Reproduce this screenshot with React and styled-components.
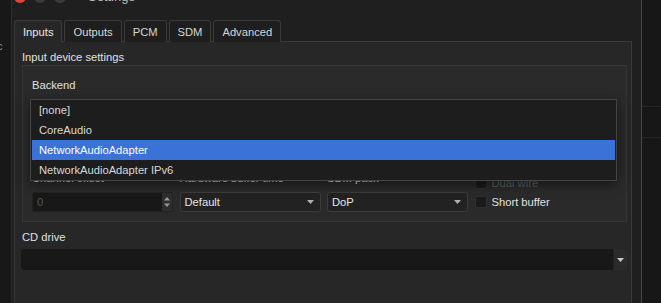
import React from "react"
import styled, { createGlobalStyle } from "styled-components"

const GlobalStyle = createGlobalStyle`
  html, body {
    margin: 0;
    padding: 0;
    background: #1e1e1e;
    overflow: hidden;
  }
  * { box-sizing: border-box; }
`

const Page = styled.div`
  display: flex;
  width: 661px;
  height: 303px;
  overflow: hidden;
  font-family: "Liberation Sans", Arial, sans-serif;
  font-size: 11.2px;
  color: #dcdcdc;
`

const LeftStrip = styled.div`
  width: 12px;
  flex: none;
  background: #181818;
  border-right: 1px solid #2e2e2e;
  display: flex;
  flex-direction: column;
`

const StripGlyph = styled.span`
  margin-top: 40px;
  margin-left: -3px;
  color: #9a9a9a;
  font-size: 11px;
`

const RightStrip = styled.div`
  flex: 1;
  background: #171717;
  border-left: 1px solid #474747;
  display: flex;
  flex-direction: column;
  padding-top: 106px;
  gap: 30px;
`

const StripLine = styled.div`
  height: 1px;
  background: #262626;
`

const Window = styled.div`
  width: 629px;
  flex: none;
  background: #1f1f1f;
  display: flex;
  flex-direction: column;
`

const TitleBar = styled.div`
  height: 4px;
  overflow: hidden;
  display: flex;
  align-items: flex-end;
  gap: 8px;
  padding-left: 2px;
`

const Light = styled.span`
  width: 12px;
  height: 12px;
  border-radius: 50%;
  margin-bottom: 1px;
  background: ${p => p.$color};
`

const TitleText = styled.span`
  margin-left: 14px;
  font-size: 13px;
  line-height: 13px;
  margin-bottom: 1px;
  color: #bdbdbd;
`

const TabBar = styled.div`
  display: flex;
  gap: 2px;
  margin: 16px 0 0 2px;
  position: relative;
  z-index: 1;
`

const Tab = styled.div`
  height: 22px;
  padding: 0 8px;
  display: flex;
  align-items: center;
  border: 1px solid #3a3a3a;
  border-bottom: none;
  border-radius: 3px 3px 0 0;
  background: ${p => (p.$active ? "#272727" : "#1e1e1e")};
  color: ${p => (p.$active ? "#e8e8e8" : "#d6d6d6")};
  margin-bottom: -1px;
`

const TabPane = styled.div`
  flex: 1;
  margin: 0 9px 0 2px;
  border: 1px solid #3a3a3a;
  border-bottom: none;
  background: #272727;
  padding: 8px 4px 0 7px;
  display: flex;
  flex-direction: column;
`

const SectionTitle = styled.div`
  line-height: 14px;
  color: #e0e0e0;
`

const GroupBox = styled.div`
  margin-top: 1px;
  border: 1px solid #353535;
  background: #2a2a2a;
  padding: 12px 9px 9px 9px;
  display: flex;
  flex-direction: column;
`

const FieldLabel = styled.div`
  line-height: 14px;
  color: ${p => (p.$dim ? "#6a6a6a" : "#e0e0e0")};
  white-space: nowrap;
`

const BackendField = styled.div`
  position: relative;
  margin-top: 6px;
  height: 20px;
`

const Popup = styled.div`
  position: absolute;
  top: 1px;
  left: -2px;
  right: 0;
  z-index: 5;
  background: #1d1d1d;
  border: 1px solid #454545;
  box-shadow: 0 3px 10px rgba(0, 0, 0, 0.5);
`

const PopupItem = styled.div`
  height: 20px;
  display: flex;
  align-items: center;
  padding-left: 7px;
  margin: 0 1px;
  background: ${p => (p.$selected ? "#3a72d8" : "transparent")};
  color: ${p => (p.$selected ? "#ffffff" : "#d8d8d8")};
`

const ControlGrid = styled.div`
  margin-top: 53px;
  display: grid;
  grid-template-columns: 141px 141px 141px 1fr;
  grid-template-rows: 14px 20px;
  column-gap: 6.5px;
  row-gap: 7px;
`

const SpinBox = styled.div`
  display: flex;
  background: #181818;
  border: 1px solid #222;
  border-radius: 2px;
  overflow: hidden;
`

const SpinValue = styled.div`
  flex: 1;
  display: flex;
  align-items: center;
  padding-left: 4px;
  color: #555;
`

const SpinArrows = styled.div`
  width: 10px;
  background: #2e2e2e;
  display: flex;
  align-items: center;
  justify-content: center;
`

const Combo = styled.div`
  display: flex;
  align-items: center;
  justify-content: space-between;
  padding: 0 6px 0 4px;
  background: #222;
  border: 1px solid #3c3c3c;
  border-radius: 3px;
  color: #e6e6e6;
`

const CheckColumn = styled.div`
  grid-column: 4;
  grid-row: 1 / span 2;
  display: flex;
  flex-direction: column;
  justify-content: flex-end;
  gap: 5px;
  padding-bottom: 3px;
  margin-top: -10px;
`

const CheckRow = styled.label`
  display: flex;
  align-items: center;
  gap: 5px;
  height: 14px;
  color: ${p => (p.$disabled ? "#5e5e5e" : "#e0e0e0")};
`

const CheckBox = styled.span`
  width: 12px;
  height: 12px;
  border-radius: 2px;
  background: #1a1a1a;
  border: 1px solid #303030;
`

const CdLabel = styled(FieldLabel)`
  margin-top: 8px;
`

const CdCombo = styled.div`
  margin: 5px 0 0 -1px;
  height: 21px;
  display: flex;
  background: #181818;
  border-radius: 3px;
  overflow: hidden;
`

const CdValue = styled.div`
  flex: 1;
`

const CdButton = styled.div`
  width: 14px;
  background: #2b2b2b;
  border-left: 1px solid #222;
  display: flex;
  align-items: center;
  justify-content: center;
`

const DownArrow = ({ color = "#b0b0b0" }) => (
  <svg width="7" height="4" viewBox="0 0 7 4">
    <path d="M0 0h7L3.5 4z" fill={color} />
  </svg>
)

const StepArrows = () => (
  <svg width="6" height="12" viewBox="0 0 6 12">
    <path d="M0 4.5L3 1l3 3.5z M0 7.5L3 11l3-3.5z" fill="#9a9a9a" />
  </svg>
)

const tabs = ["Inputs", "Outputs", "PCM", "SDM", "Advanced"]
const backends = ["[none]", "CoreAudio", "NetworkAudioAdapter", "NetworkAudioAdapter IPv6"]

const App = () => {
  return (
    <Page>
      <GlobalStyle />
      <LeftStrip>
        <StripGlyph>c</StripGlyph>
      </LeftStrip>
      <Window>
        <TitleBar>
          <Light $color="#e0443e" />
          <Light $color="#3b3b3b" />
          <Light $color="#3b3b3b" />
          <TitleText>Settings</TitleText>
        </TitleBar>
        <TabBar>
          {tabs.map((t, i) => (
            <Tab key={t} $active={i === 0}>{t}</Tab>
          ))}
        </TabBar>
        <TabPane>
          <SectionTitle>Input device settings</SectionTitle>
          <GroupBox>
            <FieldLabel>Backend</FieldLabel>
            <BackendField>
              <Popup>
                {backends.map(b => (
                  <PopupItem key={b} $selected={b === "NetworkAudioAdapter"}>{b}</PopupItem>
                ))}
              </Popup>
            </BackendField>
            <ControlGrid>
              <FieldLabel>Channel offset</FieldLabel>
              <FieldLabel>Hardware buffer time</FieldLabel>
              <FieldLabel>SDM pack</FieldLabel>
              <CheckColumn>
                <CheckRow $disabled><CheckBox />Dual wire</CheckRow>
                <CheckRow><CheckBox />Short buffer</CheckRow>
              </CheckColumn>
              <SpinBox>
                <SpinValue>0</SpinValue>
                <SpinArrows><StepArrows /></SpinArrows>
              </SpinBox>
              <Combo>Default<DownArrow /></Combo>
              <Combo>DoP<DownArrow /></Combo>
            </ControlGrid>
          </GroupBox>
          <CdLabel>CD drive</CdLabel>
          <CdCombo>
            <CdValue />
            <CdButton><DownArrow color="#c8c8c8" /></CdButton>
          </CdCombo>
        </TabPane>
      </Window>
      <RightStrip>
        <StripLine />
        <StripLine />
      </RightStrip>
    </Page>
  )
}

export default App
